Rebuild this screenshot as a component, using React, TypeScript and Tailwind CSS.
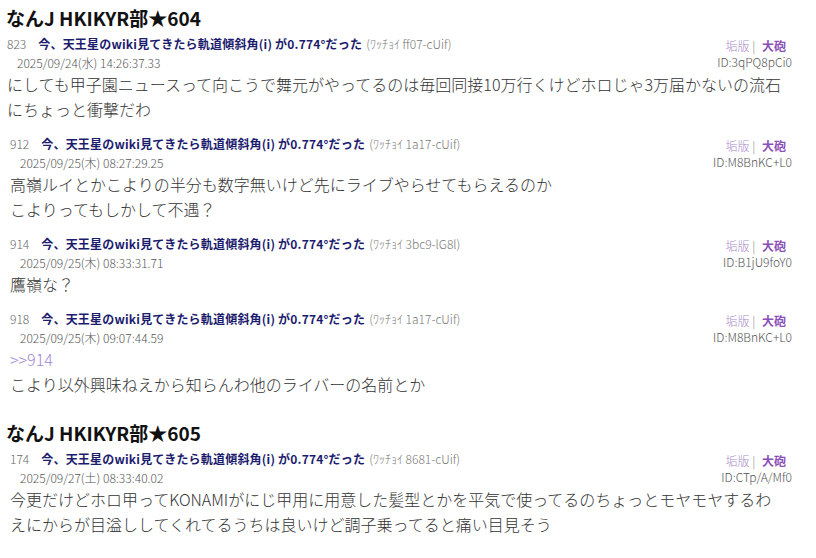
type Post = {
  no: number;
  name: string;
  date: string;
  id: string;
  quote?: string;
  lines: string[];
};

type Thread = {
  title: string;
  posts: Post[];
};

const TITLE = '今、天王星のwiki見てきたら軌道傾斜角(i) が0.774°だった';

const threads: Thread[] = [
  {
    title: 'なんJ HKIKYR部★604',
    posts: [
      {
        no: 823,
        name: '(ﾜｯﾁｮｲ ff07-cUif)',
        date: '2025/09/24(水) 14:26:37.33',
        id: 'ID:3qPQ8pCi0',
        lines: [
          'にしても甲子園ニュースって向こうで舞元がやってるのは毎回同接10万行くけどホロじゃ3万届かないの流石',
          'にちょっと衝撃だわ',
        ],
      },
      {
        no: 912,
        name: '(ﾜｯﾁｮｲ 1a17-cUif)',
        date: '2025/09/25(木) 08:27:29.25',
        id: 'ID:M8BnKC+L0',
        lines: [
          '高嶺ルイとかこよりの半分も数字無いけど先にライブやらせてもらえるのか',
          'こよりってもしかして不遇？',
        ],
      },
      {
        no: 914,
        name: '(ﾜｯﾁｮｲ 3bc9-lG8l)',
        date: '2025/09/25(木) 08:33:31.71',
        id: 'ID:B1jU9foY0',
        lines: ['鷹嶺な？'],
      },
      {
        no: 918,
        name: '(ﾜｯﾁｮｲ 1a17-cUif)',
        date: '2025/09/25(木) 09:07:44.59',
        id: 'ID:M8BnKC+L0',
        quote: '>>914',
        lines: ['こより以外興味ねえから知らんわ他のライバーの名前とか'],
      },
    ],
  },
  {
    title: 'なんJ HKIKYR部★605',
    posts: [
      {
        no: 174,
        name: '(ﾜｯﾁｮｲ 8681-cUif)',
        date: '2025/09/27(土) 08:33:40.02',
        id: 'ID:CTp/A/Mf0',
        lines: [
          '今更だけどホロ甲ってKONAMIがにじ甲用に用意した髪型とかを平気で使ってるのちょっとモヤモヤするわ',
          'えにからが目溢ししてくれてるうちは良いけど調子乗ってると痛い目見そう',
        ],
      },
    ],
  },
];

function PostRow({ post, first }: { post: Post; first: boolean }) {
  return (
    <div className={first ? 'mb-[12px] pl-[7px] pr-[24px]' : 'mb-[12px] pl-[10px] pr-[24px]'}>
      <div className="flex items-start justify-between">
        <div className="min-w-0">
          <div className="flex items-baseline whitespace-nowrap text-[12px] leading-[19px]">
            <span className="font-light text-[#666]">{post.no}</span>
            <span className="ml-[12px] font-bold tracking-[0.2px] text-[#1c1c6e]">{TITLE}</span>
            <span className="ml-[4px] font-light text-[#777]">{post.name}</span>
          </div>
          <div className="pl-[10px] text-[12px] font-light leading-[19px] text-[#555]">
            {post.date}
          </div>
        </div>
        <div className="shrink-0 pt-[4px] text-right text-[12px] leading-[16px]">
          <div className="pr-[6px]">
            <span className="font-light text-[#a98bc9]">垢版</span>
            <span className="font-light text-[#888]"> | </span>
            <span className="ml-[4px] font-bold text-[#8a4fb8]">大砲</span>
          </div>
          <div className="font-light text-[#555]">{post.id}</div>
        </div>
      </div>
      <div className="text-[16px] font-light leading-[25px] text-[#333]">
        {post.quote ? <div className="text-[#a283d6]">{post.quote}</div> : null}
        {post.lines.map((line, i) => (
          <div key={i} className="whitespace-nowrap">
            {line}
          </div>
        ))}
      </div>
    </div>
  );
}

export default function App() {
  return (
    <div
      className="h-[558px] w-[816px] overflow-hidden bg-white pt-[4px]"
      style={{ fontFamily: '"Noto Sans CJK JP", "Noto Sans", sans-serif' }}
    >
      {threads.map((thread, ti) => (
        <section key={thread.title} className={ti === 0 ? '' : 'mt-[22px]'}>
          <h1 className="px-[6px] text-[19px] font-bold leading-[28px] text-[#111]">
            {thread.title}
          </h1>
          <div className="mt-[2px]">
            {thread.posts.map((post, pi) => (
              <PostRow key={post.no} post={post} first={ti === 0 && pi === 0} />
            ))}
          </div>
        </section>
      ))}
    </div>
  );
}
